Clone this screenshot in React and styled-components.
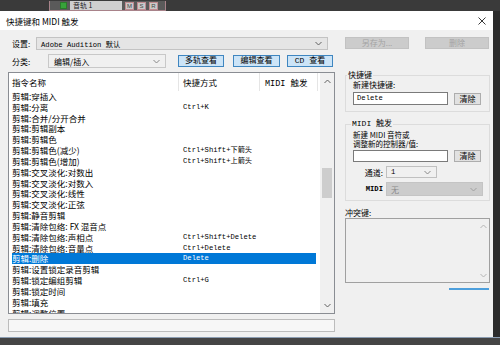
import React from 'react';
import styled, { createGlobalStyle } from 'styled-components';

const cjk = `"Noto Sans CJK SC", "Noto Sans", sans-serif`;
const mono = `"Liberation Mono", "Noto Sans CJK SC", monospace`;

const GlobalStyle = createGlobalStyle`
  html, body { margin: 0; padding: 0; background: #2f2f2f; overflow: hidden; }
  body { width: 500px; height: 345px; font-family: ${cjk}; }
  * { box-sizing: border-box; }
`;

const Page = styled.div`
  width: 500px;
  height: 345px;
  display: flex;
  flex-direction: column;
`;

const TopStrip = styled.div`
  height: 11px;
  background: #3a3a3a;
  display: flex;
  padding-left: 49px;
  align-items: flex-end;
`;

const TrackHeader = styled.div`
  width: 117px;
  height: 10px;
  background: #5a5a5a;
  border: 1px solid #a8838a;
  border-top: none;
  display: flex;
  align-items: center;
  gap: 3px;
  padding-left: 10px;
`;

const GreenBox = styled.div`
  width: 7px;
  height: 7px;
  background: #37a23a;
  border: 1px solid #2a7a2a;
`;

const NameField = styled.div`
  width: 52px;
  height: 9px;
  background: #cfcfcf;
  font-size: 7px;
  line-height: 9px;
  color: #222;
  padding-left: 3px;
  white-space: nowrap;
`;

const TrackBtn = styled.div`
  width: 9px;
  height: 8px;
  background: #c9c9c9;
  border: 1px solid #c08a90;
  font-size: 6px;
  line-height: 6px;
  color: #444;
  text-align: center;
  font-family: "Liberation Sans", sans-serif;
`;

const MiddleRow = styled.div`
  display: flex;
  height: 326px;
`;

const Dialog = styled.div`
  width: 493px;
  background: #f0f0f0;
  display: flex;
  flex-direction: column;
`;

const DarkSide = styled.div`
  flex: 1;
  background: #2b2b2b;
`;

const BottomStrip = styled.div`
  flex: 1;
  background: #454545;
  border-top: 1px solid #8b9db2;
`;

const TitleBar = styled.div`
  height: 19px;
  background: #ffffff;
  display: flex;
  align-items: center;
  padding: 0 7px 0 6px;
  font-size: 8.5px;
  color: #000;
`;

const Close = styled.svg`
  margin-left: auto;
`;

const Body = styled.div`
  flex: 1;
  display: flex;
  padding-left: 8px;
`;

const LeftCol = styled.div`
  width: 327px;
  padding-top: 7px;
  display: flex;
  flex-direction: column;
`;

const Row = styled.div`
  display: flex;
  align-items: center;
  height: ${p => p.$h}px;
  margin-top: ${p => p.$mt || 0}px;
`;

const Label = styled.div`
  width: ${p => p.$w}px;
  padding-left: 4px;
  font-size: 8px;
  color: #000;
`;

const Select = styled.div`
  width: ${p => p.$w}px;
  height: ${p => p.$h}px;
  background: ${p => p.$bg};
  border: 1px solid ${p => p.$border || '#b4b4b4'};
  display: flex;
  align-items: center;
  padding: 0 5px 0 ${p => p.$pl || 4}px;
  font-family: ${p => (p.$mono ? mono : cjk)};
  font-size: ${p => (p.$mono ? 7.2 : 8)}px;
  color: ${p => p.$color || '#000'};
  white-space: nowrap;
`;

const Chevron = styled.svg`
  margin-left: auto;
  flex: none;
`;

const ViewButton = styled.div`
  width: ${p => p.$w}px;
  height: 12px;
  margin-left: ${p => p.$ml}px;
  background: #cce4f7;
  border: 1px solid #3f86c0;
  font-size: 8px;
  font-family: ${mono};
  line-height: 10px;
  text-align: center;
  color: #000;
`;

const List = styled.div`
  height: 242px;
  margin-top: 4px;
  background: #ffffff;
  border: 1px solid #8a8d93;
  display: flex;
  overflow: hidden;
`;

const ListMain = styled.div`
  flex: 1;
  display: flex;
  flex-direction: column;
  overflow: hidden;
`;

const ListHeader = styled.div`
  height: 18px;
  flex: none;
  display: grid;
  grid-template-columns: 167px 81px 58px;
  padding-left: 3px;
`;

const HeadCell = styled.div`
  display: flex;
  align-items: center;
  padding-left: ${p => p.$pl}px;
  border-right: 1px solid #e5e5e5;
  font-size: 8.5px;
  font-family: ${p => (p.$mono ? mono : cjk)};
  color: #000;
`;

const ItemRow = styled.div`
  flex: none;
  height: 10.84px;
  width: 304px;
  margin-left: 3px;
  display: grid;
  grid-template-columns: 167px 81px 56px;
  align-items: center;
  background: ${p => (p.$sel ? '#0078d7' : 'transparent')};
  color: ${p => (p.$sel ? '#ffffff' : '#000000')};
`;

const NameCell = styled.div`
  font-size: 8.5px;
  line-height: 10.84px;
  white-space: nowrap;
  overflow: hidden;
`;

const KeyCell = styled.div`
  padding-left: 4px;
  font-family: ${mono};
  font-size: 7.2px;
  line-height: 10.84px;
  white-space: nowrap;
`;

const ScrollBar = styled.div`
  width: 14px;
  background: #f0f0f0;
  display: flex;
  flex-direction: column;
  align-items: center;
`;

const ArrowBox = styled.div`
  height: 16px;
  width: 100%;
  display: flex;
  align-items: center;
  justify-content: center;
`;

const Track = styled.div`
  flex: 1;
  width: 100%;
  display: flex;
  flex-direction: column;
  align-items: center;
`;

const Thumb = styled.div`
  margin-top: ${p => p.$top}px;
  width: 10px;
  height: 30px;
  background: #cdcdcd;
`;

const Status = styled.div`
  margin-top: 5px;
  height: 13px;
  border: 1px solid #bcbcbc;
  background: #f7f7f7;
`;

const RightCol = styled.div`
  width: 145px;
  margin-left: 10px;
  padding-top: 7px;
  display: flex;
  flex-direction: column;
`;

const TopButtons = styled.div`
  display: flex;
  justify-content: space-between;
  width: 144px;
  height: 12px;
`;

const DisabledButton = styled.div`
  width: 64px;
  height: 12px;
  background: #cccccc;
  border: 1px solid #c2c2c2;
  color: #a3a3a3;
  font-size: 8px;
  line-height: 10px;
  text-align: center;
`;

const Group = styled.fieldset`
  margin: ${p => p.$mt}px 0 0 0;
  padding: 0 0 ${p => p.$pb}px 0;
  border: 1px solid #dcdcdc;
  min-width: 0;
  width: 145px;
`;

const Legend = styled.legend`
  font-size: 8px;
  line-height: 10px;
  height: 10px;
  padding: 0 1px;
  margin-left: ${p => p.$ml}px;
  font-family: ${p => (p.$mono ? mono : cjk)};
  color: #000;
`;

const GroupInner = styled.div`
  padding-left: 7px;
  display: flex;
  flex-direction: column;
`;

const Text = styled.div`
  font-size: ${p => p.$fs || 8}px;
  line-height: ${p => p.$lh}px;
  margin-top: ${p => p.$mt || 0}px;
  color: #000;
  white-space: pre-line;
`;

const InputRow = styled.div`
  display: flex;
  align-items: center;
  margin-top: ${p => p.$mt}px;
  gap: 6px;
`;

const Input = styled.div`
  width: 95px;
  height: ${p => p.$h}px;
  background: #ffffff;
  border: 1px solid #7a7a7a;
  font-family: ${mono};
  font-size: 7.2px;
  line-height: ${p => p.$h - 2}px;
  padding-left: 3px;
  color: #000;
`;

const ClearButton = styled.div`
  width: 27px;
  height: 12px;
  background: #e1e1e1;
  border: 1px solid #adadad;
  font-size: 8px;
  line-height: 10px;
  text-align: center;
  color: #000;
`;

const FieldRow = styled.div`
  display: flex;
  align-items: center;
  margin-top: 4px;
`;

const FieldLabel = styled.div`
  width: 33px;
  padding-right: 3px;
  text-align: right;
  font-size: 8px;
  font-family: ${p => (p.$mono ? mono : cjk)};
  ${p => (p.$mono ? 'font-size: 7.2px; font-weight: bold;' : '')}
  color: #000;
`;

const ConflictBox = styled.div`
  height: 65px;
  width: 145px;
  background: #f0f0f0;
  border: 1px solid #a0a0a0;
  display: flex;
  justify-content: flex-end;
`;

const ConflictScroll = styled.div`
  width: 12px;
  display: flex;
  flex-direction: column;
  justify-content: space-between;
  align-items: center;
  padding: 5px 0 4px;
`;

const BlueLine = styled.div`
  margin-top: 5px;
  align-self: flex-end;
  margin-right: 1px;
  width: 40px;
  height: 2px;
  background: #4d9fdc;
`;

const Down = ({ color = '#606060' }) => (
  <Chevron width="7" height="5" viewBox="0 0 7 5">
    <polyline points="0.5,1 3.5,4 6.5,1" fill="none" stroke={color} strokeWidth="1" />
  </Chevron>
);

const ArrowIcon = ({ up, color = '#606060' }) => (
  <svg width="7" height="5" viewBox="0 0 7 5">
    <polyline
      points={up ? '0.5,4 3.5,1 6.5,4' : '0.5,1 3.5,4 6.5,1'}
      fill="none"
      stroke={color}
      strokeWidth="1"
    />
  </svg>
);

const rows = [
  ['剪辑:穿插入', ''],
  ['剪辑:分离', 'Ctrl+K'],
  ['剪辑:合并/分开合并', ''],
  ['剪辑:剪辑副本', ''],
  ['剪辑:剪辑色', ''],
  ['剪辑:剪辑色(减少)', 'Ctrl+Shift+下箭头'],
  ['剪辑:剪辑色(增加)', 'Ctrl+Shift+上箭头'],
  ['剪辑:交叉淡化:对数出', ''],
  ['剪辑:交叉淡化:对数入', ''],
  ['剪辑:交叉淡化:线性', ''],
  ['剪辑:交叉淡化:正弦', ''],
  ['剪辑:静音剪辑', ''],
  ['剪辑:清除包络: FX 混音点', ''],
  ['剪辑:清除包络:声相点', 'Ctrl+Shift+Delete'],
  ['剪辑:清除包络:音量点', 'Ctrl+Delete'],
  ['剪辑:删除', 'Delete', true],
  ['剪辑:设置锁定录音剪辑', ''],
  ['剪辑:锁定编组剪辑', 'Ctrl+G'],
  ['剪辑:锁定时间', ''],
  ['剪辑:填充', ''],
  ['剪辑:调整位置', ''],
];

export default function App() {
  return (
    <Page>
      <GlobalStyle />
      <TopStrip>
        <TrackHeader>
          <GreenBox />
          <NameField>音轨 1</NameField>
          <TrackBtn>M</TrackBtn>
          <TrackBtn>S</TrackBtn>
          <TrackBtn>R</TrackBtn>
        </TrackHeader>
      </TopStrip>
      <MiddleRow>
        <Dialog>
          <TitleBar>
            快捷键和 MIDI 触发
            <Close width="8" height="8" viewBox="0 0 8 8">
              <path d="M0.5 0.5 L7.5 7.5 M7.5 0.5 L0.5 7.5" stroke="#222" strokeWidth="0.9" />
            </Close>
          </TitleBar>
          <Body>
            <LeftCol>
              <Row $h={13}>
                <Label $w={28}>设置:</Label>
                <Select $w={292} $h={13} $bg="#e5e5e5" $border="#c3c3c3" $mono>
                  Adobe Audition 默认
                  <Down />
                </Select>
              </Row>
              <Row $h={14} $mt={4}>
                <Label $w={40}>分类:</Label>
                <Select $w={118} $h={14} $bg="#f0f0f0" $border="#c8c8c8" $pl={5}>
                  编辑/插入
                  <Down color="#888" />
                </Select>
                <ViewButton $w={46} $ml={12}>多轨查看</ViewButton>
                <ViewButton $w={47} $ml={9}>编辑查看</ViewButton>
                <ViewButton $w={46} $ml={7}>CD 查看</ViewButton>
              </Row>
              <List>
                <ListMain>
                  <ListHeader>
                    <HeadCell $pl={0}>指令名称</HeadCell>
                    <HeadCell $pl={4}>快捷方式</HeadCell>
                    <HeadCell $pl={5} $mono>MIDI 触发</HeadCell>
                  </ListHeader>
                  {rows.map(([name, key, sel], i) => (
                    <ItemRow key={i} $sel={sel}>
                      <NameCell>{name}</NameCell>
                      <KeyCell>{key}</KeyCell>
                      <KeyCell />
                    </ItemRow>
                  ))}
                </ListMain>
                <ScrollBar>
                  <ArrowBox>
                    <ArrowIcon up />
                  </ArrowBox>
                  <Track>
                    <Thumb $top={79} />
                  </Track>
                  <ArrowBox>
                    <ArrowIcon />
                  </ArrowBox>
                </ScrollBar>
              </List>
              <Status />
            </LeftCol>
            <RightCol>
              <TopButtons>
                <DisabledButton>另存为...</DisabledButton>
                <DisabledButton>删除</DisabledButton>
              </TopButtons>
              <Group $mt={21} $pb={6}>
                <Legend $ml={1}>快捷键</Legend>
                <GroupInner>
                  <Text $lh={10}>新建快捷键:</Text>
                  <InputRow $mt={2}>
                    <Input $h={13}>Delete</Input>
                    <ClearButton>清除</ClearButton>
                  </InputRow>
                </GroupInner>
              </Group>
              <Group $mt={7} $pb={4}>
                <Legend $ml={5} $mono>MIDI 触发</Legend>
                <GroupInner>
                  <Text $lh={9} $fs={7.5} $mt={1}>
                    {'新建 MIDI 音符或\n调整新的控制器/值:'}
                  </Text>
                  <InputRow $mt={2}>
                    <Input $h={12} />
                    <ClearButton>清除</ClearButton>
                  </InputRow>
                  <FieldRow>
                    <FieldLabel>通道:</FieldLabel>
                    <Select $w={51} $h={12} $bg="#f0f0f0" $border="#c0c0c0" $mono>
                      1
                      <Down color="#888" />
                    </Select>
                  </FieldRow>
                  <FieldRow>
                    <FieldLabel $mono>MIDI</FieldLabel>
                    <Select $w={97} $h={14} $bg="#cccccc" $border="#c4c4c4" $color="#8a8a8a">
                      无
                      <Down color="#a0a0a0" />
                    </Select>
                  </FieldRow>
                </GroupInner>
              </Group>
              <Text $lh={10} $mt={7}>冲突键:</Text>
              <ConflictBox>
                <ConflictScroll>
                  <ArrowIcon up color="#b5b5b5" />
                  <ArrowIcon color="#b5b5b5" />
                </ConflictScroll>
              </ConflictBox>
              <BlueLine />
            </RightCol>
          </Body>
        </Dialog>
        <DarkSide />
      </MiddleRow>
      <BottomStrip />
    </Page>
  );
}
